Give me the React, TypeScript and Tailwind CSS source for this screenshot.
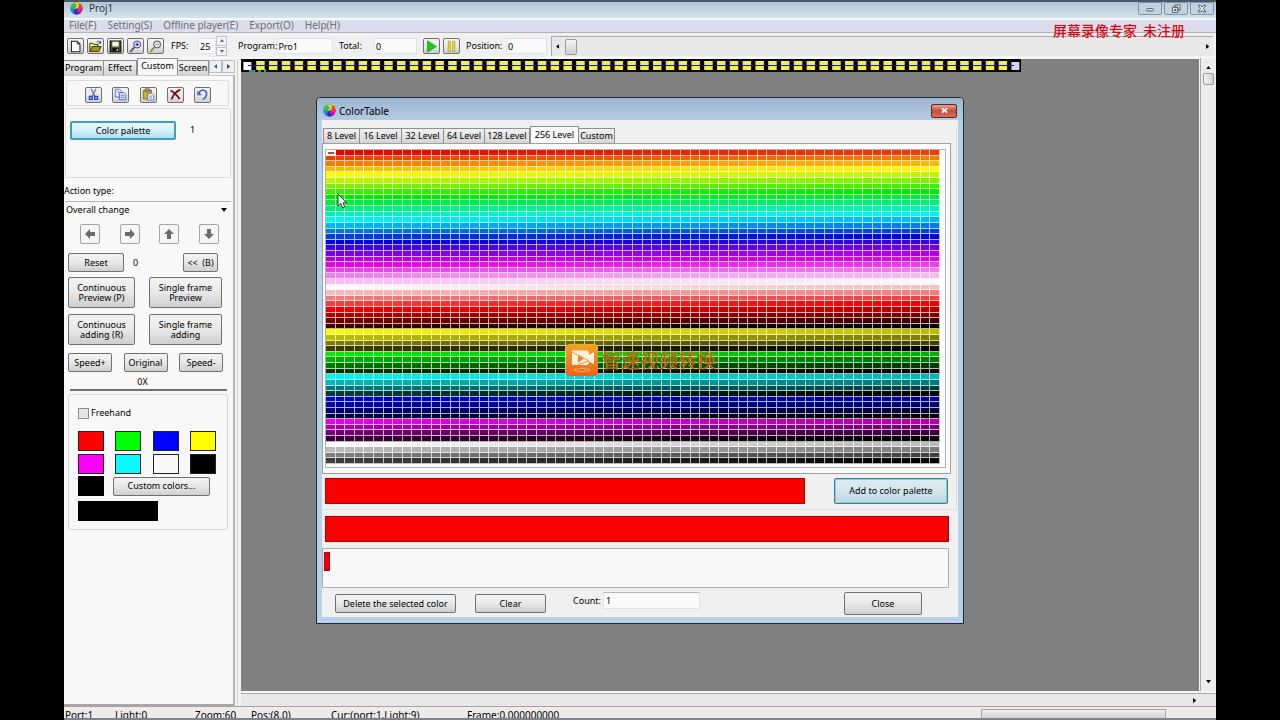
import { ReactNode } from "react";
import clsx from "clsx";

type RGB = [number, number, number];

const RED: RGB = [238, 0, 0];
const YELLOW: RGB = [250, 250, 0];
const GREEN: RGB = [0, 235, 0];
const CYAN: RGB = [0, 245, 245];
const BLUE: RGB = [0, 0, 225];
const MAGENTA: RGB = [232, 0, 228];
const WHITE: RGB = [250, 250, 250];
const BLACK: RGB = [0, 0, 0];

// every ramp takes 256 cells, four rows of 64
const ramps: [RGB, RGB][] = [
  [RED, YELLOW],
  [YELLOW, GREEN],
  [GREEN, CYAN],
  [CYAN, BLUE],
  [BLUE, MAGENTA],
  [MAGENTA, WHITE],
  [WHITE, RED],
  [RED, BLACK],
  [YELLOW, BLACK],
  [GREEN, BLACK],
  [CYAN, BLACK],
  [BLUE, BLACK],
  [MAGENTA, BLACK],
  [WHITE, BLACK],
];

const cells = ramps.flatMap(([from, to]) =>
  Array.from({ length: 256 }, (_, i) => {
    const c = from.map((v, k) => Math.round(v + ((to[k] - v) * i) / 255));
    return `rgb(${c.join(",")})`;
  })
);

const levels = ["8 Level", "16 Level", "32 Level", "64 Level", "128 Level", "256 Level", "Custom"];

const swatches = [
  { name: "Red", color: "bg-[#ff0000]" },
  { name: "Green", color: "bg-[#00ff00]" },
  { name: "Blue", color: "bg-[#0000ff]" },
  { name: "Yellow", color: "bg-[#ffff00]" },
  { name: "Magenta", color: "bg-[#ff00ff]" },
  { name: "Cyan", color: "bg-[#00ffff]" },
  { name: "White", color: "bg-[#f8f8f8]" },
  { name: "Black", color: "bg-black" },
];

const tones = {
  normal: "border border-[#707070] bg-linear-to-b from-[#f3f3f3] via-[#e8e8e8] to-[#cfcfcf]",
  flat: "border border-[#a4a4a4] bg-[#f6f6f6]",
  focused: "border-2 border-[#3c9cc4] bg-linear-to-b from-[#eaf6fc] via-[#d6effa] to-[#b0def4]",
  primary: "border border-[#3c7f99] bg-linear-to-b from-[#dcecf2] via-[#d8e4ec] to-[#b4d8e6] ring-1 ring-[#8cc8dc] ring-inset",
};

interface ButtonProps {
  children: ReactNode;
  className?: string;
  label?: string;
  tone?: keyof typeof tones;
}

const Button = ({ children, className, label, tone = "normal" }: ButtonProps) => (
  <button
    type="button"
    aria-label={label}
    className={clsx(
      "flex shrink-0 items-center justify-center rounded-xs text-center leading-[10px] whitespace-nowrap",
      tones[tone],
      className
    )}
  >
    {children}
  </button>
);

const ToolButton = ({ children, label }: ButtonProps) => (
  <Button label={label} className="h-4 w-[17px]">
    <svg viewBox="0 0 16 16" className="size-[13px]">
      {children}
    </svg>
  </Button>
);

const Logo = () => (
  <svg viewBox="0 0 14 14" className="size-[13px] shrink-0">
    <circle cx="7" cy="7" r="6.500" fill="#4a3c88" />
    {["#e8dc20", "#f04818", "#d81898", "#4020c8", "#1890e0", "#30c838"].map((color, i) => (
      <path
        key={color}
        d="M7 7C8.500 5 7.500 2.500 4.500 1.200C8 -.2 11.500 1.200 12.600 3.800C11.500 6 9 7.200 7 7Z"
        fill={color}
        transform={`rotate(${i * 60 - 20} 7 7)`}
      />
    ))}
    <path d="M5.500 7.500C5.500 5.500 8 5 8.500 6.800" fill="none" stroke="#f4f4f4" strokeWidth=".9" />
  </svg>
);

const Magnifier = ({ plus }: { plus?: boolean }) => (
  <>
    <circle cx="10" cy="5.500" r="4.300" fill="#dfe8f8" stroke="#3a4468" strokeWidth="1.200" />
    <path d="M6.500 9L1.500 14.500" stroke={plus ? "#5a5a78" : "#a09030"} strokeWidth="2.400" />
    <path d="M8 5.500H12" stroke={plus ? "#2838a8" : "#c8a020"} strokeWidth="1.500" />
    {plus && <path d="M10 3.500V7.500" stroke="#2838a8" strokeWidth="1.500" />}
  </>
);

const TitleBar = () => (
  <header className="flex h-[18px] shrink-0 items-start border-t-2 border-[#4a5666] bg-linear-to-b from-[#b3c4d8] to-[#d3e6ea] pl-[6px]">
    <Logo />
    <h1 className="ml-[6px] flex-1 text-[10px] leading-[13px] text-[#30343c]">Proj1</h1>
    <div className="flex gap-[2px] pr-[2px]">
      <WindowButton label="Minimize">
        <rect x="3.500" y="7.500" width="9" height="3" rx="1" />
      </WindowButton>
      <WindowButton label="Restore">
        <path d="M6.500 2.500H13.500V9.500H10.500V5.500H6.500ZM3.500 5.500H10.500V12.500H3.500ZM6 8.500H8V10H6Z" />
      </WindowButton>
      <WindowButton label="Close">
        <path d="M3 3H6L8 5.500L10 3H13L10 7.500L13 12H10L8 9.500L6 12H3L6 7.500Z" />
      </WindowButton>
    </div>
  </header>
);

const WindowButton = ({ children, label }: ButtonProps) => (
  <button
    type="button"
    aria-label={label}
    className="flex h-[13px] w-6 items-center justify-center rounded-b-xs border border-[#8393a6] bg-[#c3d2e0]"
  >
    <svg viewBox="0 0 16 16" className="size-3" fill="#f4f6f8" stroke="#4c5664" strokeWidth="1.300">
      {children}
    </svg>
  </button>
);

const MenuBar = () => (
  <nav className="flex h-[15px] shrink-0 items-start gap-[11px] border-t-2 border-b border-t-[#f4f7fa] border-b-[#b4b4bc] bg-[#dcddec] pl-[5px] text-[10px] leading-[11px] text-[#6d6d76]">
    {["File(F)", "Setting(S)", "Offline player(E)", "Export(O)", "Help(H)"].map((item) => (
      <button key={item} type="button" className="whitespace-nowrap">
        {item}
      </button>
    ))}
  </nav>
);

interface FieldProps {
  label: string;
  value: string;
  className: string;
  inputClass: string;
}

const Field = ({ label, value, className, inputClass }: FieldProps) => (
  <label className={clsx("flex shrink-0 items-center", className)}>
    <span className="shrink-0 whitespace-nowrap">{label}</span>
    <input
      type="text"
      defaultValue={value}
      className={clsx("h-4 border border-[#e2e3ea] bg-[#fafafa] outline-none", inputClass)}
    />
  </label>
);

const Toolbar = () => (
  <div className="flex h-[25px] shrink-0 items-center border-b border-[#fafafa] bg-[#f0f0f0] pt-[2px] pl-[3px]">
    <div className="flex gap-[3px]">
      <ToolButton label="New">
        <path d="M3 1.500H10L13.500 5V14.500H3Z" fill="#fff" stroke="#222" strokeWidth="1.300" />
        <path d="M10 1.500V5H13.500" fill="none" stroke="#222" />
      </ToolButton>
      <ToolButton label="Open">
        <path d="M1 14V4H5L6 5.500H11V8" fill="#f4ec70" stroke="#38380c" strokeWidth="1.200" />
        <path d="M1 14L4 8H15L12 14Z" fill="#a89818" stroke="#38380c" strokeWidth="1.200" />
        <path d="M9 3C11 .5 13 1.500 14 4M14 1V4H11.500" fill="none" stroke="#222" />
      </ToolButton>
      <ToolButton label="Save">
        <path d="M1.500 1.500H14.500V14.500H1.500Z" fill="#4e5418" stroke="#111" strokeWidth="1.500" />
        <path d="M4 2H12V8H4Z" fill="#f0f0f0" />
        <path d="M4 10H12V14H4Z" fill="#111" />
        <path d="M9.500 11H11V13.500H9.500Z" fill="#eee" />
      </ToolButton>
      <ToolButton label="Zoom in">
        <Magnifier plus />
      </ToolButton>
      <ToolButton label="Zoom out">
        <Magnifier />
      </ToolButton>
    </div>
    <Field label="FPS:" value="25" className="ml-[7px] w-[45px] justify-between" inputClass="w-[18px] pl-px" />
    <div className="flex h-5 w-[11px] shrink-0 flex-col gap-px">
      <button
        type="button"
        aria-label="Increase FPS"
        className="flex flex-1 items-center justify-center border border-[#c4c4c8] bg-[#f4f4f4]"
      >
        <svg viewBox="0 0 6 4" className="w-1">
          <path d="M0 4L3 0L6 4Z" fill="#4a5a8c" />
        </svg>
      </button>
      <button
        type="button"
        aria-label="Decrease FPS"
        className="flex flex-1 items-center justify-center border border-[#c4c4c8] bg-[#f4f4f4]"
      >
        <svg viewBox="0 0 6 4" className="w-1">
          <path d="M0 0L3 4L6 0Z" fill="#4a5a8c" />
        </svg>
      </button>
    </div>
    <Field label="Program:" value="Pro1" className="ml-[11px] w-[95px] justify-between" inputClass="w-[56px]" />
    <Field label="Total:" value="0" className="ml-[6px] w-[78px] justify-between" inputClass="w-[43px] pl-px" />
    <div className="ml-[6px] flex gap-[3px]">
      <ToolButton label="Play">
        <path d="M3 1L14 8L3 15Z" fill="#14d014" stroke="#2a9c2a" />
      </ToolButton>
      <ToolButton label="Pause">
        <path d="M4 1.500H6.500V14.500H4ZM9.500 1.500H12V14.500H9.500Z" fill="#f4ec30" stroke="#a8a020" />
      </ToolButton>
    </div>
    <Field label="Position:" value="0" className="ml-[6px] w-[81px] justify-between" inputClass="w-[41px] pl-px" />
    <div className="mr-[3px] ml-1 flex h-5 flex-1 items-center justify-between border-t border-l border-[#a8a8a8] bg-[#e8e8e8] px-1">
      <div className="flex items-center gap-[6px]">
        <svg viewBox="0 0 4 6" className="h-[5px]">
          <path d="M4 0L0 3L4 6Z" />
        </svg>
        <div className="h-4 w-3 rounded-xs border border-[#9a9a9a] bg-linear-to-b from-[#f6f6f6] to-[#cfcfcf]" />
      </div>
      <svg viewBox="0 0 4 6" className="h-[5px]">
        <path d="M0 0L4 3L0 6Z" />
      </svg>
    </div>
  </div>
);

const SideTabs = () => (
  <div role="tablist" className="flex h-[17px] shrink-0 items-end">
    {["Program", "Effect", "Custom", "Screen"].map((tab) => (
      <button
        key={tab}
        type="button"
        role="tab"
        aria-selected={tab === "Custom"}
        className={clsx(
          "shrink-0 overflow-hidden border border-[#8e8f94] text-center whitespace-nowrap",
          tab === "Custom"
            ? "h-[17px] w-[41px] border-b-0 bg-[#f8f8f8] pb-[2px]"
            : "h-[15px] border-b-0 bg-linear-to-b from-[#f2f2f2] to-[#d4d4d4]",
          tab === "Program" && "w-10 border-l-0",
          tab === "Effect" && "w-[33px] border-l-0",
          tab === "Screen" && "w-[31px] border-l-0"
        )}
      >
        {tab}
      </button>
    ))}
    {["M4 0L0 3L4 6Z", "M0 0L4 3L0 6Z"].map((d, i) => (
      <button
        key={d}
        type="button"
        aria-label={i ? "Next tab" : "Previous tab"}
        className="mb-[2px] flex h-[13px] w-[13px] shrink-0 items-center justify-center border border-[#b8bcc4] bg-[#f0f0f0]"
      >
        <svg viewBox="0 0 4 6" className="h-[5px]">
          <path d={d} fill="#3c4c78" />
        </svg>
      </button>
    ))}
  </div>
);

const EditTools = () => (
  <div className="mt-1 mr-1 ml-[2px] flex h-[26px] items-center justify-between rounded-xs border border-[#dcdcdc] pt-[3px] pr-[17px] pl-[18px]">
    <ToolButton label="Cut">
      <path d="M5 1L9.500 10M11 1L6.500 10" stroke="#6a7ea0" strokeWidth="1.600" />
      <path d="M3 10.500H6.500V14H3ZM9.500 10.500H13V14H9.500Z" fill="none" stroke="#2454c0" strokeWidth="1.800" />
    </ToolButton>
    <ToolButton label="Copy">
      <path d="M1.500 1.500H7L9 4V11H1.500Z" fill="#e6eefc" stroke="#3c68c0" />
      <path d="M6.500 5.500H12L14.500 8V14.500H6.500Z" fill="#d0e0fa" stroke="#2c58b8" />
      <path d="M8.500 9H12.500M8.500 11.500H12.500M3.500 4.500H6" stroke="#4878cc" />
    </ToolButton>
    <ToolButton label="Paste">
      <path d="M1.500 2.500H11.500V13.500H1.500Z" fill="#d8a828" stroke="#806010" />
      <path d="M4 1H9V4H4Z" fill="#a8a8a8" stroke="#555" />
      <path d="M7 6.500H12L14.500 9V15H7Z" fill="#eef2fc" stroke="#4468a8" />
      <path d="M9 10H12.500M9 12.500H12.500" stroke="#4878cc" />
    </ToolButton>
    <ToolButton label="Delete">
      <path d="M2 3C6 5 10 9 13 13.500M14 2C9 4 5 9 3 14" fill="none" stroke="#7c0810" strokeWidth="2.200" />
    </ToolButton>
    <ToolButton label="Undo">
      <path d="M3.500 6C6 1 13 2 13 7C13 10.500 11 12.500 8.500 14" fill="none" stroke="#3868c8" strokeWidth="2" />
      <path d="M1.500 3V9H7.500Z" fill="#3868c8" />
    </ToolButton>
  </div>
);

const arrows = [
  { name: "Left", rotate: "rotate-180" },
  { name: "Right", rotate: "rotate-0" },
  { name: "Up", rotate: "-rotate-90" },
  { name: "Down", rotate: "rotate-90" },
];

const Sidebar = () => (
  <aside className="flex w-[171px] shrink-0 flex-col">
    <SideTabs />
    <div className="flex-1 border-t border-r-2 border-b-2 border-t-[#c8c8c8] border-r-[#b4b4b4] border-b-[#a8a8a8] bg-[#f8f8f8]">
      <EditTools />
      <div className="mt-[2px] mr-[2px] ml-px flex h-[70px] items-start rounded-xs border border-[#dcdcdc] pt-3 pl-1">
        <Button tone="focused" className="h-[19px] w-[106px]">
          Color palette
        </Button>
        <span className="ml-[14px] leading-[18px]">1</span>
      </div>
      <label htmlFor="action" className="mt-[7px] block leading-3">
        Action type:
      </label>
      <div className="relative mt-1 mr-[2px] ml-px">
        <select
          id="action"
          className="block h-[17px] w-full appearance-none border-t border-[#b4b4b4] bg-[#f8f8f8] pb-px pl-px outline-none"
        >
          <option>Overall change</option>
        </select>
        <svg viewBox="0 0 6 4" className="pointer-events-none absolute top-[7px] right-1 w-[6px]">
          <path d="M0 0H6L3 4Z" />
        </svg>
      </div>
      <div className="mt-[6px] mr-[14px] ml-4 flex justify-between">
        {arrows.map(({ name, rotate }) => (
          <Button key={name} label={name} tone="flat" className="size-5">
            <svg viewBox="0 0 12 12" className={clsx("size-3", rotate)}>
              <path d="M1 4H6V1L11 6L6 11V8H1Z" fill="#6a6a6a" />
            </svg>
          </Button>
        ))}
      </div>
      <div className="mt-[9px] mr-[15px] ml-1 flex items-center">
        <Button className="h-[19px] w-14">Reset</Button>
        <span className="ml-[9px] flex-1">0</span>
        <Button className="h-[19px] w-[35px]">&lt;&lt;&nbsp; (B)</Button>
      </div>
      <div className="mt-[5px] mr-[11px] ml-1 grid grid-cols-[67px_73px] justify-between gap-y-[6px]">
        <Button className="h-[31px]">
          Continuous
          <br />
          Preview (P)
        </Button>
        <Button className="h-[31px]">
          Single frame
          <br />
          Preview
        </Button>
        <Button className="h-[31px]">
          Continuous
          <br />
          adding (R)
        </Button>
        <Button className="h-[31px]">
          Single frame
          <br />
          adding
        </Button>
      </div>
      <div className="mt-2 mr-[10px] ml-1 flex justify-between">
        <Button className="h-[19px] w-11">Speed+</Button>
        <Button className="h-[19px] w-11">Original</Button>
        <Button className="h-[19px] w-11">Speed-</Button>
      </div>
      <p className="mt-1 pr-3 text-center leading-3">0X</p>
      <hr className="mt-px mr-[6px] ml-[6px] border-t-2 border-[#707070]" />
      <div className="mt-[3px] mr-[5px] ml-1 rounded-xs border border-[#d4d8da] px-[9px] pt-3 pb-2">
        <label className="flex items-center gap-[2px] leading-3">
          <input type="checkbox" className="size-[11px] appearance-none border border-[#8a8c90] bg-[#e4e6e8]" />
          Freehand
        </label>
        <div className="mt-3 mr-[2px] grid grid-cols-[repeat(4,26px)] justify-between gap-y-[3px]">
          {swatches.map(({ name, color }) => (
            <button key={name} type="button" aria-label={name} className={clsx("h-5 border border-[#222]", color)} />
          ))}
        </div>
        <div className="mt-[2px] flex items-center gap-[9px]">
          <button type="button" aria-label="Current color" className="h-5 w-[26px] bg-black" />
          <Button className="h-[19px] w-[97px]">Custom colors...</Button>
        </div>
        <div className="mt-[5px] h-5 w-20 bg-black" />
      </div>
    </div>
  </aside>
);

const LightStrip = () => (
  <svg viewBox="0 0 780 13" className="block h-[13px] w-[780px]">
    <rect width="780" height="13" />
    <path d="M6 6.500H774" stroke="#1818a0" strokeWidth="1" />
    {Array.from({ length: 61 }, (_, i) => {
      const x = 2.4 + i * 12.8;
      if (i === 0 || i === 60)
        return <rect key={i} x={x} y="3" width="8" height="8" fill={i ? "#d4d4f0" : "#ffffff"} />;
      return <path key={i} d={`M${x} 2h8.500v4h-8.500zm0 5h8.500v4h-8.500z`} fill="#f4f048" />;
    })}
    <path d="M7 6.500H14M766 6.500H773" stroke="#1818a0" strokeWidth="1" />
    <path d="M8 12H14M17 12H20M24 10V13" stroke="#18d8d8" strokeWidth="1.500" />
  </svg>
);

const LevelTabs = () => (
  <div role="tablist" className="flex h-[17px] items-end pl-px">
    {levels.map((level, i) => (
      <button
        key={level}
        type="button"
        role="tab"
        aria-selected={i === 5}
        className={clsx(
          "border border-b-0 border-[#8e8f94] text-center whitespace-nowrap",
          i === 5 ? "h-[17px] w-[49px] bg-[#fafafa] pb-px" : "h-[15px] bg-linear-to-b from-[#f2f2f2] to-[#d4d4d4]",
          i === 0 && "w-[37px]",
          (i === 1 || i === 2) && "w-[42px] border-l-0",
          i === 3 && "w-[41px] border-l-0",
          i === 4 && "w-[45px] border-l-0",
          i === 6 && "w-[36px] border-l-0"
        )}
      >
        {level}
      </button>
    ))}
  </div>
);

const ColorGrid = () => (
  <div className="grid h-[314px] grid-cols-[repeat(64,1fr)] grid-rows-[repeat(56,1fr)]">
    {cells.map((color, i) =>
      i === 0 ? (
        <div key={i} className="flex items-center justify-center bg-white">
          <div className="h-[2px] w-[6px] bg-[#c04050]" />
        </div>
      ) : (
        <div key={i} className="border-r border-b border-white/70" style={{ backgroundColor: color }} />
      )
    )}
  </div>
);

const Watermark = () => (
  <div className="absolute top-[246px] left-[249px] flex items-center gap-1">
    <svg viewBox="0 0 32 32" className="size-8">
      <defs>
        <linearGradient id="badge" x1="0" y1="0" x2="0" y2="1">
          <stop offset="0" stopColor="#f0a828" />
          <stop offset="1" stopColor="#f06018" />
        </linearGradient>
      </defs>
      <rect width="32" height="32" rx="4" fill="url(#badge)" />
      <path
        d="M7 6.500H20Q23 6.500 23 9.500V11L28 8V20L23 17.500V18Q23 21 20 21H7Q6 21 6 20V8Q6 6.500 7 6.500Z"
        fill="#fff2dc"
      />
      <path d="M6 8L23 17L11 21" fill="none" stroke="#f09838" strokeWidth="1" />
      <path d="M12 10.500V19L18 14.500Z" fill="#f08830" />
      <path d="M8 26L11 24.500M8 26L11 27.500M24 26L21 24.500M24 26L21 27.500" stroke="#f8b070" strokeWidth="1.200" />
      <ellipse cx="16" cy="26" rx="4" ry="1.800" fill="none" stroke="#f8b070" />
    </svg>
    <span className="font-['Noto_Sans_CJK_SC',sans-serif] text-[19px] leading-6 font-medium whitespace-nowrap text-[#c86414]">
      智速视频转换
    </span>
  </div>
);

const Cursor = () => (
  <svg viewBox="0 0 10 16" className="absolute top-[95px] left-[20px] h-4 w-[10px]">
    <path d="M1 1V13L3.800 10.500L5.800 15L7.800 14L6 9.800H9.500Z" fill="#fff" stroke="#222" strokeWidth=".9" />
  </svg>
);

const ColorTableDialog = () => (
  <section
    role="dialog"
    aria-label="ColorTable"
    className="absolute top-[38px] left-[75px] w-[648px] rounded-t border border-[#1c2c3c] bg-[#b9d1e8] px-[5px] pb-[6px]"
  >
    <header className="-mx-[5px] flex h-[22px] items-center rounded-t bg-linear-to-b from-[#9cb6d2] to-[#b4cbe2] pt-[3px] pr-[6px] pl-[6px]">
      <Logo />
      <h2 className="ml-[3px] flex-1 text-[10px] leading-3">ColorTable</h2>
      <button
        type="button"
        aria-label="Close window"
        className="flex h-[14px] w-[26px] items-center justify-center rounded-xs border border-[#5c2820] bg-linear-to-b from-[#e0a498] via-[#c44c38] to-[#d07458]"
      >
        <svg viewBox="0 0 8 8" className="size-[7px]">
          <path d="M1 1.500L7 6.500M7 1.500L1 6.500" stroke="#fff" strokeWidth="2" />
        </svg>
      </button>
    </header>
    <div className="bg-[#f0f0f0] pt-[6px] pb-[2px]">
      <div className="mr-px border-r border-b border-[#dde0e2] pb-[5px]">
        <LevelTabs />
        <div className="mr-[5px] border border-[#a0a0a0] bg-[#fafafa] py-[5px] pr-1 pl-[2px]">
          <div className="border border-[#b0b0b0] bg-white pr-[5px] pb-[3px]">
            <ColorGrid />
          </div>
        </div>
        <div className="mt-[4px] mr-2 ml-[3px] flex items-center gap-[29px]">
          <div className="h-[26px] flex-1 border border-[#b00000] bg-[#fc0000]" />
          <Button tone="primary" className="h-[26px] w-[114px]">
            Add to color palette
          </Button>
        </div>
      </div>
      <div className="mt-[6px] mr-[9px] ml-[3px] h-[26px] border border-[#b00000] bg-[#fc0000]" />
      <div className="mt-[6px] mr-[9px] h-10 border border-[#a8acb0] bg-[#f8f8f8] pt-[3px] pl-px">
        <div className="h-[19px] w-[6px] border border-[#c00000] bg-[#f00000]" />
      </div>
      <div className="mt-[4px] mr-9 ml-[13px] flex items-center">
        <Button className="h-[19px] w-[121px]">Delete the selected color</Button>
        <Button className="ml-[19px] h-[19px] w-[71px]">Clear</Button>
        <Field
          label="Count:"
          value="1"
          className="ml-[27px] flex-1 gap-[2px] self-start"
          inputClass="h-[17px] w-[97px] pl-[2px] border-t-[#b4b8bc]"
        />
        <Button className="h-[23px] w-[78px]">Close</Button>
      </div>
    </div>
    <Watermark />
    <Cursor />
  </section>
);

const Workspace = () => (
  <main className="flex min-w-0 flex-1 flex-col">
    <div className="flex flex-1">
      <div className="relative mt-px flex-1 bg-[#808080]">
        <LightStrip />
        <ColorTableDialog />
      </div>
      <div className="ml-px flex w-4 flex-col items-center border-l border-[#a8a8a8] bg-[#ececec] pt-2 pb-2">
        <svg viewBox="0 0 6 4" className="w-[5px]">
          <path d="M0 4L3 0L6 4Z" />
        </svg>
        <div className="mt-1 mb-auto h-3 w-[11px] rounded-xs border border-[#9a9a9a] bg-linear-to-r from-[#f6f6f6] to-[#cfcfcf]" />
        <svg viewBox="0 0 6 4" className="w-[5px]">
          <path d="M0 0H6L3 4Z" />
        </svg>
      </div>
    </div>
    <div className="mt-[2px] flex h-[13px] items-center justify-end border-t border-[#a8a8a8] bg-[#e8e8e8] pr-5">
      <svg viewBox="0 0 4 6" className="h-[5px]">
        <path d="M0 0L4 3L0 6Z" />
      </svg>
    </div>
  </main>
);

const status = [
  { text: "Port:1", width: "w-[50px]" },
  { text: "Light:0", width: "w-20" },
  { text: "Zoom:60", width: "w-14" },
  { text: "Pos:(8.0)", width: "w-20" },
  { text: "Cur:(port:1,Light:9)", width: "w-[136px]" },
  { text: "Frame:0.000000000", width: "w-40" },
];

const StatusBar = () => (
  <footer className="flex h-[14px] shrink-0 items-start overflow-hidden border-t border-b-2 border-t-[#a4a4a4] border-b-[#7c8494] bg-[#efebeb] pt-[2px] pl-px text-[10px] leading-[13px]">
    {status.map(({ text, width }) => (
      <span key={text} className={clsx("shrink-0 whitespace-nowrap", width)}>
        {text}
      </span>
    ))}
    <div className="mr-[50px] ml-auto h-3 w-[185px] border border-[#a4a4a4] bg-linear-to-b from-[#f0f0f0] to-[#cccccc]" />
  </footer>
);

const App = () => (
  <div className="flex h-screen min-h-[720px] bg-black px-16 font-['Noto_Sans',sans-serif] text-[9px] leading-3 text-black">
    <div className="relative flex min-w-0 flex-1 flex-col bg-[#f4f4f4]">
      <TitleBar />
      <MenuBar />
      <Toolbar />
      <div className="flex flex-1">
        <Sidebar />
        <div className="mt-px mr-[3px] w-[3px] shrink-0 border-r border-[#d0d0d0] bg-[#f4f4f4]" />
        <Workspace />
      </div>
      <StatusBar />
      <p className="absolute top-[20px] right-[31px] flex gap-[6px] font-['Noto_Sans_CJK_SC',sans-serif] text-[14px] leading-5 font-medium whitespace-nowrap text-[#d80810]">
        <span>屏幕录像专家</span>
        <span>未注册</span>
      </p>
    </div>
  </div>
);

export default App;
